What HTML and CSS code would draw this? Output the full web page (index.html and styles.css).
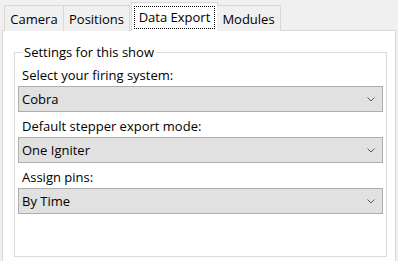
FILE: index.html
```html
<!DOCTYPE html>
<html lang="en">
  <head>
    <meta charset="UTF-8" />
    <title>Show Settings</title>
    <link rel="stylesheet" href="styles.css">
  </head>
  <body>
    <div class="tabs">
      <div class="tab tab-camera">Camera</div>
      <div class="tab tab-positions">Positions</div>
      <div class="tab tab-selected"><span class="focus">Data Export</span></div>
      <div class="tab tab-modules">Modules</div>
    </div>

    <div class="tab-page">
      <fieldset class="group">
        <legend>Settings for this show</legend>

        <label class="field-label">Select your firing system:</label>
        <div class="combo">
          <span>Cobra</span>
          <svg class="chevron" width="8" height="5" viewBox="0 0 8 5"><polyline points="0.5,0.5 4,4 7.5,0.5" /></svg>
        </div>

        <label class="field-label">Default stepper export mode:</label>
        <div class="combo">
          <span>One Igniter</span>
          <svg class="chevron" width="8" height="5" viewBox="0 0 8 5"><polyline points="0.5,0.5 4,4 7.5,0.5" /></svg>
        </div>

        <label class="field-label">Assign pins:</label>
        <div class="combo">
          <span>By Time</span>
          <svg class="chevron" width="8" height="5" viewBox="0 0 8 5"><polyline points="0.5,0.5 4,4 7.5,0.5" /></svg>
        </div>
      </fieldset>
    </div>
  </body>
</html>
```

FILE: styles.css
```css
body {
  margin: 0;
  background: #f0f0f0;
  font-family: "Open Sans", "Noto Sans", sans-serif;
  font-size: 13px;
  color: #000;
  width: 398px;
  height: 261px;
  overflow: hidden;
}

.tabs {
  display: flex;
  align-items: flex-end;
  height: 31px;
  padding-left: 4px;
  position: relative;
  z-index: 1;
}

.tab {
  box-sizing: border-box;
  height: 26px;
  border: 1px solid #d9d9d9;
  border-bottom: none;
  background: #f0f0f0;
  display: flex;
  align-items: center;
  justify-content: center;
  padding-top: 1px;
}

.tab-camera {
  width: 60px;
}

.tab-positions {
  width: 66px;
  border-left: none;
}

.tab-modules {
  width: 64px;
  border-left: none;
}

.tab-selected {
  width: 87px;
  height: 29px;
  margin: 0 -1px 0 1px;
  background: #fff;
  padding: 3px 2px 2px;
}

.focus {
  box-sizing: border-box;
  width: 100%;
  height: 100%;
  border: 1px dotted #000;
  display: flex;
  align-items: center;
  justify-content: center;
  padding-bottom: 1px;
}

.tab-page {
  box-sizing: border-box;
  margin: -1px 0 0 2px;
  width: 394px;
  height: 240px;
  background: #fff;
  border: 1px solid #d9d9d9;
  border-bottom: none;
  padding: 13px 8px 0 11px;
}

.group {
  margin: 0;
  border: 1px solid #dcdcdc;
  padding: 7px 3px 42px 3px;
  display: flex;
  flex-direction: column;
}

.group legend {
  margin-left: 4px;
  padding: 0 2px;
  line-height: 16px;
}

.field-label {
  display: block;
  line-height: 16px;
  margin: 6px 0 3px 4px;
}

.group legend + .field-label {
  margin-top: 0;
}

.combo {
  box-sizing: border-box;
  height: 26px;
  border: 1px solid #adadad;
  background: #e1e1e1;
  display: flex;
  align-items: center;
  justify-content: space-between;
  padding: 0 7px 0 3px;
}

.chevron {
  fill: none;
  stroke: #5a5a5a;
  stroke-width: 1;
}
```
